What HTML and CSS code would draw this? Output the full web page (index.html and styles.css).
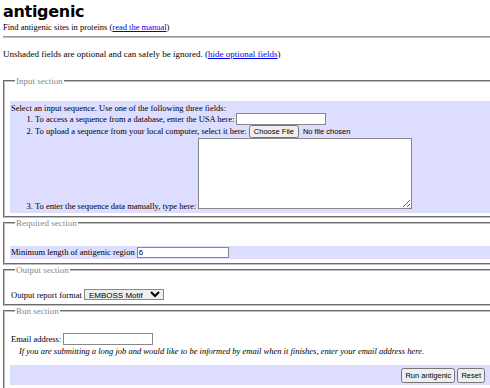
FILE: index.html
```html
<!DOCTYPE html>
<html lang="en">
<head>
    <meta charset="UTF-8">
    <title>antigenic</title>
    <link rel="stylesheet" href="styles.css">
</head>
<body>
    <div class="page">
        <h1 class="title">antigenic</h1>
        <div class="subtitle">Find antigenic sites in proteins (<a href="#">read the manual</a>)</div>
        <hr class="rule">
        <p class="note">Unshaded fields are optional and can safely be ignored. (<a href="#">hide optional fields</a>)</p>

        <form>
            <!-- Input -->
            <fieldset class="section">
                <legend>Input section</legend>
                <div class="shaded seq-block">
                    <div>Select an input sequence. Use one of the following three fields:</div>
                    <ol class="seq-list">
                        <li>To access a sequence from a database, enter the USA here: <input type="text" class="usa"></li>
                        <li>To upload a sequence from your local computer, select it here: <input type="file" class="file"></li>
                        <li>To enter the sequence data manually, type here: <textarea class="paste"></textarea></li>
                    </ol>
                </div>
            </fieldset>

            <!-- Required -->
            <fieldset class="section required-section">
                <legend>Required section</legend>
                <div class="shaded row required-row">
                    Minimum length of antigenic region <input type="text" class="minlen" value="6">
                </div>
            </fieldset>

            <!-- Output -->
            <fieldset class="section">
                <legend>Output section</legend>
                <div class="row output-row">
                    Output report format <select class="rformat">
                        <option>EMBOSS Motif</option>
                        <option>GFF</option>
                        <option>Table</option>
                    </select>
                </div>
            </fieldset>

            <!-- Run -->
            <fieldset class="section run-section">
                <legend>Run section</legend>
                <div class="row email-row">
                    Email address: <input type="text" class="email">
                    <div class="hint">If you are submitting a long job and would like to be informed by email when it finishes, enter your email address here.</div>
                </div>
                <div class="shaded actions">
                    <button type="submit">Run antigenic</button>
                    <button type="reset">Reset</button>
                </div>
            </fieldset>
        </form>
    </div>
</body>
</html>
```

FILE: styles.css
```css
html {
    overflow: hidden;
}
body {
    margin: 0;
    padding: 0;
    font-family: 'Liberation Serif', serif;
    font-size: 8.5px;
    color: #000;
    background: #fff;
}
.page {
    width: 560px;
    padding: 2px 3px;
}
a {
    color: #00e;
}
.title {
    font-family: 'DejaVu Sans', Verdana, sans-serif;
    font-size: 16px;
    font-weight: bold;
    margin: 0;
    line-height: 20px;
    letter-spacing: -0.3px;
}
.subtitle {
    line-height: 10px;
}
.rule {
    margin: 4px 0 0 0;
    border: 0;
    border-top: 1px solid #999;
    border-bottom: 1px solid #bbb;
}
.note {
    font-size: 9px;
    margin: 11px 0 17px 0;
}
.section {
    margin: 0;
    padding: 8px 0 3px 5px;
    border: 2px groove #c0c0c0;
    border-right: 0;
}
.required-section {
    padding-bottom: 4px;
}
.run-section {
    padding-bottom: 10px;
}
.section legend {
    color: #888;
    font-size: 9px;
    padding: 0 1px;
    margin-left: 5px;
}
.shaded {
    background: #ddf;
}
.seq-block {
    margin-top: 7px;
    padding: 2px 1px 1px;
}
.seq-list {
    margin: 0;
    padding-left: 24px;
}
.seq-list li {
    line-height: 11px;
}
.usa {
    width: 86px;
    height: 10px;
    font-size: 9px;
    padding: 0 1px;
    border: 1px solid #888;
}
.file {
    font-family: Arial, 'Liberation Sans', sans-serif;
    font-size: 7.5px;
}
.file::file-selector-button {
    font-size: 7.5px;
    padding: 0 3px;
    margin-right: 4px;
}
.paste {
    width: 212px;
    height: 69px;
    border: 1px solid #888;
    margin: 0;
    padding: 0;
}
.row {
    padding: 1px 1px;
}
.required-row {
    margin-top: 10px;
}
.output-row {
    margin-top: 5px;
}
.email-row {
    margin-top: 8px;
}
.minlen {
    width: 88px;
    height: 9px;
    font-size: 8px;
    padding: 0 1px;
    border: 1px solid #888;
}
.rformat {
    width: 80px;
    height: 11px;
    font-size: 8px;
    font-family: Arial, 'Liberation Sans', sans-serif;
    padding: 0;
    border: 1px solid #888;
}
.email {
    width: 86px;
    height: 10px;
    font-size: 9px;
    padding: 0 1px;
    border: 1px solid #888;
}
.hint {
    font-style: italic;
    padding-left: 8px;
    margin-top: 1px;
}
.actions {
    box-sizing: border-box;
    margin-top: 8px;
    padding: 3px 5px 2px 0;
    width: 480px;
    text-align: right;
}
.actions button {
    font-family: Arial, 'Liberation Sans', sans-serif;
    font-size: 7.5px;
    padding: 1px 2px;
    margin: 0;
}
```
